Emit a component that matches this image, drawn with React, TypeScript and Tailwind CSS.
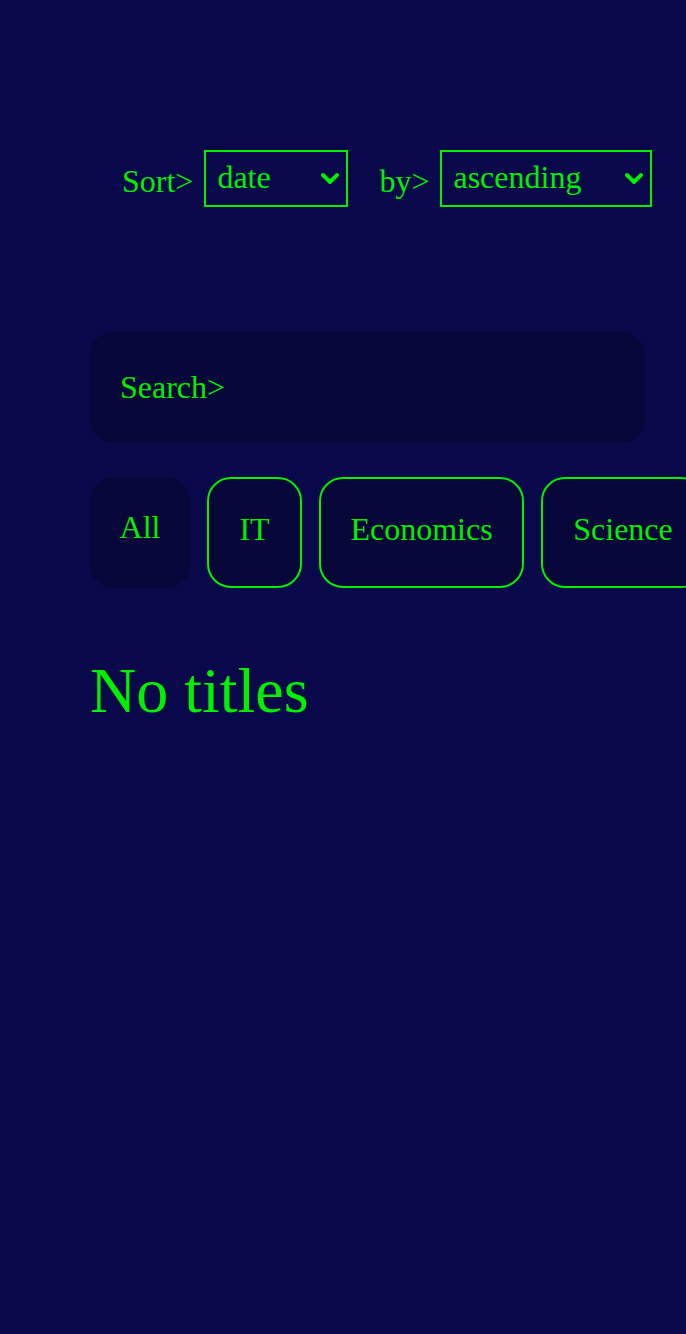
const categories = [
  { name: 'All', w: 'w-[100px]' },
  { name: 'IT', w: 'w-[95px]' },
  { name: 'Economics', w: 'w-[205px]' },
  { name: 'Science', w: 'w-[164px]' },
]

function Picker({ value, width }: { value: string; width: string }) {
  return (
    <div className={`relative flex h-[57px] items-center border-2 border-[#00f000] ${width}`}>
      <span className="-mt-[3px] pl-[11px] text-[32px] leading-none">{value}</span>
      <svg
        className="absolute right-[6px] top-[18px] h-[16px] w-[20px]"
        viewBox="0 0 20 16"
        fill="none"
        stroke="currentColor"
        strokeWidth={4}
        strokeLinecap="round"
        strokeLinejoin="round"
      >
        <polyline points="3,5 10,12 17,5" />
      </svg>
    </div>
  )
}

export default function App() {
  return (
    <div className="min-h-[1334px] w-full overflow-hidden bg-[#08084a] pt-[150px] pl-[90px] font-['Liberation_Serif',serif] text-[#00f000]">
      <div className="flex items-center pl-8">
        <span className="mt-[5px] text-[32px] leading-none">Sort&gt;</span>
        <div className="ml-[11px]">
          <Picker value="date" width="w-[144px]" />
        </div>
        <span className="ml-[31px] mt-[5px] text-[32px] leading-none">by&gt;</span>
        <div className="ml-[11px]">
          <Picker value="ascending" width="w-[212px]" />
        </div>
      </div>

      <div className="mt-[125px] flex h-[111px] w-[555px] items-center rounded-[24px] bg-[#060638] pb-[2px] pl-[30px] text-[32px]">
        Search&gt;
      </div>

      <div className="mt-[34px] flex gap-[17px] whitespace-nowrap">
        {categories.map((c, i) => (
          <button
            key={c.name}
            className={
              i === 0
                ? `flex h-[111px] shrink-0 items-center justify-center rounded-[24px] border-2 border-transparent bg-[#060638] pb-[12px] text-[32px] ${c.w}`
                : `flex h-[111px] shrink-0 items-center justify-center rounded-[24px] border-2 border-[#00f000] bg-[#060638] pb-[8px] text-[32px] ${c.w}`
            }
          >
            {c.name}
          </button>
        ))}
      </div>

      <h1 className="mt-[66px] text-[64px] leading-[1.15]">No titles</h1>
    </div>
  )
}
